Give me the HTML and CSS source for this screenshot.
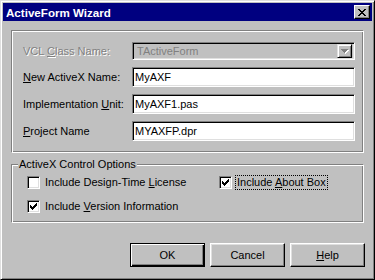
FILE: index.html
```html
<!DOCTYPE html>
<html lang="en">
<head>
  <meta charset="UTF-8">
  <meta name="viewport" content="width=device-width, initial-scale=1.0">
  <title>ActiveForm Wizard</title>
  <link rel="stylesheet" href="styles.css">
</head>
<body>
  <div class="window">
    <div class="titlebar">
      <span class="title">ActiveForm Wizard</span>
      <button class="close-btn" aria-label="Close">
        <svg width="8" height="7" viewBox="0 0 8 7"><path d="M0 0h2v1h-2z M6 0h2v1h-2z M1 1h2v1h-2z M5 1h2v1h-2z M2 2h4v1h-4z M3 3h2v1h-2z M2 4h4v1h-4z M1 5h2v1h-2z M5 5h2v1h-2z M0 6h2v1h-2z M6 6h2v1h-2z" fill="#000"/></svg>
      </button>
    </div>

    <div class="content">
      <div class="group names">
        <label class="disabled">VCL <u>C</u>lass Name:</label>
        <div class="combo">
          <span class="combo-text">TActiveForm</span>
          <span class="combo-btn">
            <svg width="8" height="5" viewBox="0 0 8 5">
              <path d="M1 1h7v1h-1v1h-1v1h-1v1h-1v-1h-1v-1h-1v-1h-1z" fill="#fff"/>
              <path d="M0 0h7v1h-1v1h-1v1h-1v1h-1v-1h-1v-1h-1v-1h-1z" fill="#808080"/>
            </svg>
          </span>
        </div>

        <label><u>N</u>ew ActiveX Name:</label>
        <input class="edit" type="text" value="MyAXF">

        <label>Implementation <u>U</u>nit:</label>
        <input class="edit" type="text" value="MyAXF1.pas">

        <label><u>P</u>roject Name</label>
        <input class="edit" type="text" value="MYAXFP.dpr">
      </div>

      <div class="group options">
        <span class="caption">ActiveX Control Options</span>
        <div class="check">
          <span class="box"></span>
          <span class="check-label">Include Design-Time <u>L</u>icense</span>
        </div>
        <div class="check">
          <span class="box">
            <svg width="7" height="7" viewBox="0 0 7 7"><path d="M0 2h1v1h1v1h1v-1h1v-1h1v-1h1v-1h1v3h-1v1h-1v1h-1v1h-1v1h-1v-1h-1v-1h-1z" fill="#000"/></svg>
          </span>
          <span class="check-label focused">Include <u>A</u>bout Box</span>
        </div>
        <div class="check">
          <span class="box">
            <svg width="7" height="7" viewBox="0 0 7 7"><path d="M0 2h1v1h1v1h1v-1h1v-1h1v-1h1v-1h1v3h-1v1h-1v1h-1v1h-1v1h-1v-1h-1v-1h-1z" fill="#000"/></svg>
          </span>
          <span class="check-label">Include <u>V</u>ersion Information</span>
        </div>
      </div>

      <div class="buttons">
        <button class="btn default">OK</button>
        <button class="btn">Cancel</button>
        <button class="btn"><u>H</u>elp</button>
      </div>
    </div>
  </div>
</body>
</html>
```

FILE: styles.css
```css
body {
  margin: 0;
  background-color: #c0c0c0;
  font-family: "Liberation Sans", Arial, sans-serif;
  font-size: 11px;
  color: #000;
}

.window {
  width: 375px;
  height: 280px;
  box-sizing: border-box;
  border: 1px solid;
  border-color: #dfdfdf #000 #000 #dfdfdf;
  box-shadow: inset 1px 1px #fff, inset -1px -1px #808080;
  padding: 2px;
  background-color: #c0c0c0;
}

.titlebar {
  height: 18px;
  background-color: #000080;
  display: flex;
  align-items: center;
  justify-content: space-between;
  padding: 0 2px 0 3px;
}

.title {
  color: #fff;
  font-weight: bold;
  font-size: 11.6px;
}

.close-btn {
  width: 16px;
  height: 14px;
  padding: 0;
  box-sizing: border-box;
  background-color: #c0c0c0;
  border: 1px solid;
  border-color: #fff #000 #000 #fff;
  box-shadow: inset -1px -1px #808080;
  display: flex;
  align-items: center;
  justify-content: center;
}

.content {
  padding: 9px 8px 0 8px;
}

.group {
  border: 1px solid;
  border-color: #808080 #fff #fff #808080;
  box-shadow: inset 1px 1px #fff, inset -1px -1px #808080;
}

.names {
  display: grid;
  grid-template-columns: 109px 1fr;
  grid-template-rows: 18px 20px 20px 20px;
  row-gap: 7px;
  align-items: center;
  padding: 11px 8px 11px 11px;
}

.names label u,
.check-label u,
.btn u {
  text-decoration-thickness: 1px;
  text-underline-offset: 1px;
}

.disabled {
  color: #808080;
  text-shadow: 1px 1px 0 #fff;
}

.combo {
  height: 18px;
  box-sizing: border-box;
  border: 1px solid;
  border-color: #808080 #fff #fff #808080;
  box-shadow: inset 1px 1px #000, inset -1px -1px #dfdfdf;
  display: flex;
  align-items: center;
  justify-content: space-between;
  padding: 2px 2px 2px 4px;
}

.combo-text {
  color: #808080;
}

.combo-btn {
  width: 15px;
  height: 14px;
  box-sizing: border-box;
  border: 1px solid;
  border-color: #dfdfdf #000 #000 #dfdfdf;
  box-shadow: inset 1px 1px #fff, inset -1px -1px #808080;
  display: flex;
  align-items: center;
  justify-content: center;
}

.edit {
  height: 20px;
  width: 100%;
  box-sizing: border-box;
  margin: 0;
  border: 1px solid;
  border-color: #808080 #fff #fff #808080;
  box-shadow: inset 1px 1px #000, inset -1px -1px #dfdfdf;
  padding: 0 2px 0 2px;
  font-family: "Liberation Sans", Arial, sans-serif;
  font-size: 11px;
  color: #000;
  background-color: #fff;
  outline: none;
}

.options {
  position: relative;
  margin-top: 11px;
  display: grid;
  grid-template-columns: 192px 1fr;
  row-gap: 11px;
  padding: 11px 8px 9px 15px;
}

.caption {
  position: absolute;
  top: -7px;
  left: 6px;
  padding: 0 1px;
  background-color: #c0c0c0;
  line-height: 13px;
}

.check {
  display: flex;
  align-items: center;
  height: 13px;
}

.box {
  width: 13px;
  height: 13px;
  box-sizing: border-box;
  border: 1px solid;
  border-color: #808080 #fff #fff #808080;
  box-shadow: inset 1px 1px #000, inset -1px -1px #dfdfdf;
  background-color: #fff;
  flex-shrink: 0;
  display: flex;
  padding: 2px;
}

.box svg {
  display: block;
}

.check-label {
  margin-left: 3px;
  padding: 0 1px;
  border: 1px dotted transparent;
  line-height: 13px;
  white-space: nowrap;
}

.check-label.focused {
  border-color: #000;
}

.buttons {
  display: flex;
  justify-content: flex-end;
  gap: 5px;
  margin-top: 20px;
  margin-right: -1px;
}

.btn {
  width: 75px;
  height: 24px;
  box-sizing: border-box;
  padding: 0;
  background-color: #c0c0c0;
  border: 1px solid;
  border-color: #fff #000 #000 #fff;
  box-shadow: inset -1px -1px #808080, inset 1px 1px #dfdfdf;
  font-family: "Liberation Sans", Arial, sans-serif;
  font-size: 11px;
  color: #000;
}

.btn.default {
  border-color: #000;
  box-shadow: inset 1px 1px #fff, inset -1px -1px #000, inset -2px -2px #808080;
}
```
